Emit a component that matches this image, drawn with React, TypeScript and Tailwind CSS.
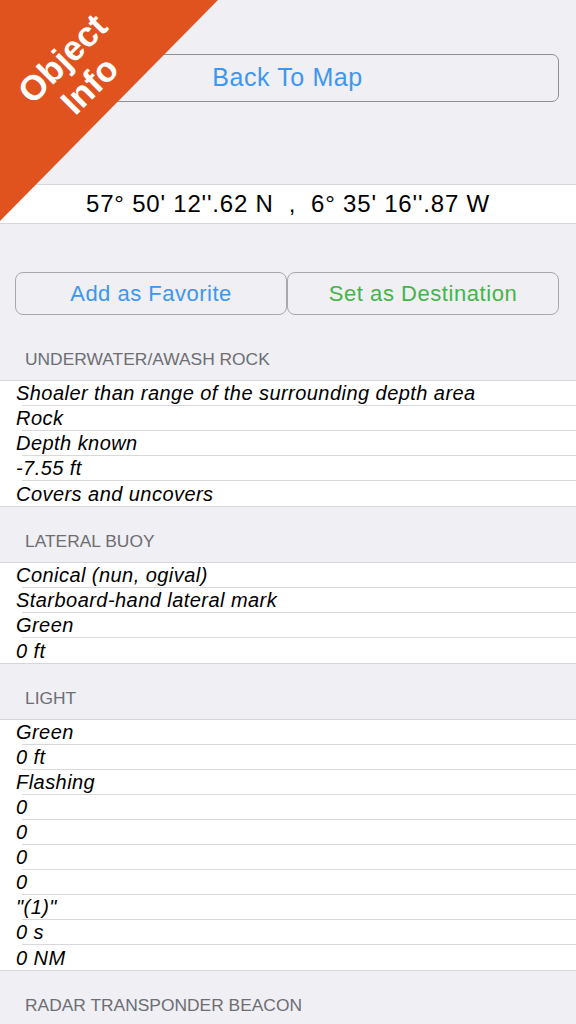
import React from 'react'

const sections = [
  {
    title: 'UNDERWATER/AWASH ROCK',
    rows: [
      'Shoaler than range of the surrounding depth area',
      'Rock',
      'Depth known',
      '-7.55 ft',
      'Covers and uncovers',
    ],
  },
  {
    title: 'LATERAL BUOY',
    rows: ['Conical (nun, ogival)', 'Starboard-hand lateral mark', 'Green', '0 ft'],
  },
  {
    title: 'LIGHT',
    rows: ['Green', '0 ft', 'Flashing', '0', '0', '0', '0', '"(1)"', '0 s', '0 NM'],
  },
  {
    title: 'RADAR TRANSPONDER BEACON',
    rows: [],
  },
]

function Section({ title, rows }: { title: string; rows: string[] }) {
  return (
    <section>
      <div className="h-[55px] flex items-end pb-[10px] px-[25px]">
        <h3 className="text-[17.4px] leading-[22px] text-[#6d6d72]">{title}</h3>
      </div>
      {rows.length > 0 && (
        <ul className="bg-white border-y border-[#d6d6da]">
          {rows.map((row, i) => (
            <li key={i} className="pl-[16px]">
              <div
                className={
                  'h-[25px] flex items-center italic text-[20px] tracking-[0.45px] text-black ' +
                  (i < rows.length - 1 ? 'border-b border-[#d9d9dd] ml-[6px] -indent-[6px]' : '')
                }
              >
                {row}
              </div>
            </li>
          ))}
        </ul>
      )}
    </section>
  )
}

export default function App() {
  return (
    <div
      className="relative h-[1024px] bg-[#efeff4] overflow-hidden"
      style={{ fontFamily: '"Liberation Sans", Arial, sans-serif' }}
    >
      <div className="pt-[54px] pl-[16px] pr-[17px]">
        <button className="w-full h-[48px] rounded-[7px] border-[1.5px] border-[#8e8e93] text-[25px] tracking-[0.6px] text-[#3d97f0]">
          Back To Map
        </button>
      </div>

      <div className="mt-[82px] h-[40px] bg-white border-y border-[#d6d6da] flex items-center justify-center text-[24px] tracking-[0.8px] text-black">
        57° 50' 12''.62 N&nbsp;&nbsp;,&nbsp;&nbsp;6° 35' 16''.87 W
      </div>

      <div className="mt-[48px] flex pl-[15px] pr-[17px]">
        <button className="flex-1 h-[43px] rounded-[8px] border border-[#a7a7ac] text-[22px] tracking-[0.5px] text-[#3d97f0]">
          Add as Favorite
        </button>
        <button className="flex-1 h-[43px] rounded-[8px] border border-[#a7a7ac] text-[22px] tracking-[0.55px] text-[#44b549]">
          Set as Destination
        </button>
      </div>

      <div className="pt-[10px]">
        {sections.map((s) => (
          <Section key={s.title} title={s.title} rows={s.rows} />
        ))}
      </div>

      <div
        className="absolute left-0 top-0 w-[218px] h-[221px] bg-[#e0531e]"
        style={{ clipPath: 'polygon(0 0, 100% 0, 0 100%)' }}
      >
        <div className="absolute left-[-24px] top-[34px] w-[200px] h-[76px] -rotate-45 text-center text-white font-bold text-[35px] leading-[38px]">
          Object
          <br />
          Info
        </div>
      </div>
    </div>
  )
}
